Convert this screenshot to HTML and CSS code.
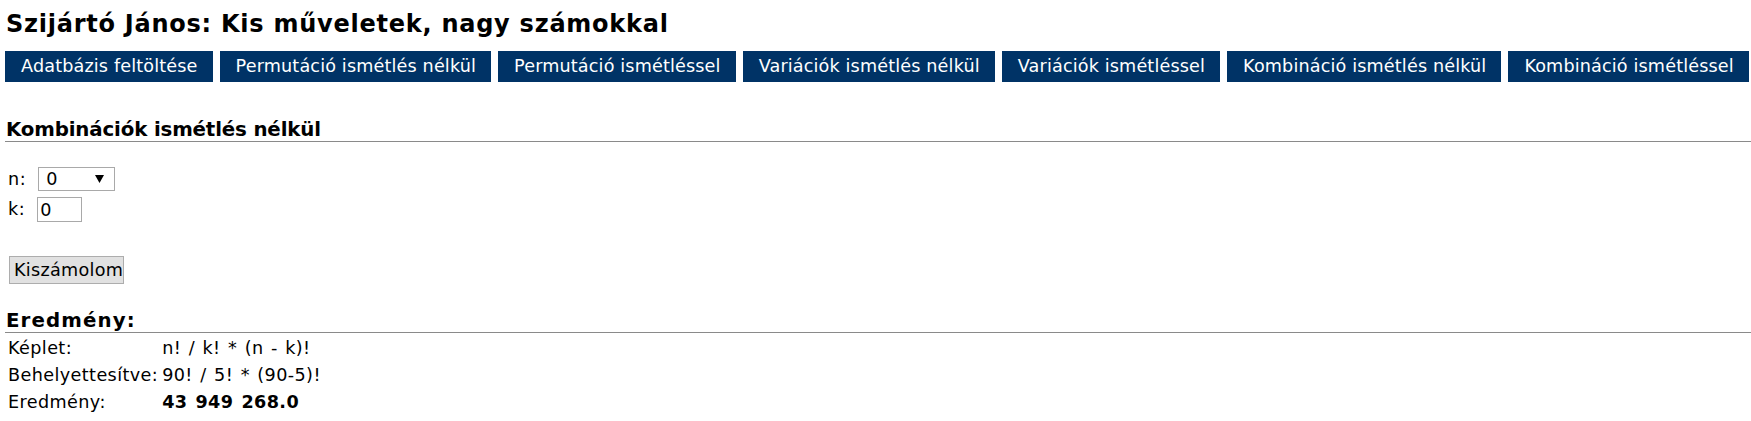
FILE: index.html
```html
<!DOCTYPE html>
<html lang="hu">
<head>
<meta charset="utf-8">
<title>Szijártó János: Kis műveletek, nagy számokkal</title>
<link rel="stylesheet" href="styles.css">
</head>
<body>
<div class="page">
  <h1 class="title">Szijártó János: Kis műveletek, nagy számokkal</h1>
  <nav class="nav">
    <a class="nav-btn" href="#">Adatbázis feltöltése</a>
    <a class="nav-btn" href="#">Permutáció ismétlés nélkül</a>
    <a class="nav-btn" href="#">Permutáció ismétléssel</a>
    <a class="nav-btn" href="#">Variációk ismétlés nélkül</a>
    <a class="nav-btn" href="#">Variációk ismétléssel</a>
    <a class="nav-btn" href="#">Kombináció ismétlés nélkül</a>
    <a class="nav-btn" href="#">Kombináció ismétléssel</a>
  </nav>

  <h2 class="section-title">Kombinációk ismétlés nélkül</h2>

  <form class="calc-form">
    <div class="field">
      <label class="field-label" for="n">n:</label>
      <span class="select-wrap">
        <select id="n" class="select">
          <option>0</option>
        </select>
        <svg class="select-arrow" width="9" height="8" viewBox="0 0 9 8"><path d="M0 0 L9 0 L4.5 8 Z" fill="#000"/></svg>
      </span>
    </div>
    <div class="field">
      <label class="field-label" for="k">k:</label>
      <input id="k" class="text-input" type="text" value="0">
    </div>
    <button type="button" class="submit-btn">Kiszámolom</button>
  </form>

  <h2 class="section-title result-title">Eredmény:</h2>
  <table class="result-table">
    <tr><td>Képlet:</td><td>n! / k! * (n - k)!</td></tr>
    <tr><td>Behelyettesítve:</td><td>90! / 5! * (90-5)!</td></tr>
    <tr><td>Eredmény:</td><td class="result-value">43 949 268.0</td></tr>
  </table>
</div>
</body>
</html>
```

FILE: styles.css
```css
html, body {
  margin: 0;
  padding: 0;
  background: #ffffff;
}

body {
  font-family: "DejaVu Sans", Verdana, sans-serif;
  font-size: 17.6px;
  color: #000000;
}

.page {
  padding: 10px 0 0 5px;
}

.title {
  margin: 0;
  font-size: 24px;
  line-height: 28px;
  font-weight: bold;
  letter-spacing: 0.75px;
  padding-left: 1px;
}

.nav {
  display: flex;
  gap: 7px;
  margin-top: 13px;
}

.nav-btn {
  display: block;
  flex: none;
  background: #003366;
  color: #ffffff;
  text-decoration: none;
  font-size: 17.6px;
  line-height: 21px;
  letter-spacing: 0.15px;
  padding: 5px 15px 5px 16px;
  white-space: nowrap;
}

.section-title {
  margin: 36px 0 0 0;
  font-size: 19.8px;
  line-height: 23px;
  font-weight: bold;
  letter-spacing: -0.15px;
  border-bottom: 1px solid #8a8a8a;
  padding-left: 1px;
}

.calc-form {
  margin-top: 25px;
  display: flex;
  flex-direction: column;
  align-items: flex-start;
}

.field {
  display: flex;
  align-items: center;
  gap: 12px;
  padding-left: 3px;
}

.field + .field {
  margin-top: 6px;
}

.field-label {
  font-size: 17.6px;
  line-height: 21px;
  letter-spacing: 0.6px;
}

.select-wrap {
  position: relative;
  display: inline-block;
}

.select {
  appearance: none;
  -webkit-appearance: none;
  width: 77px;
  height: 24px;
  border: 1px solid #a9a9a9;
  border-radius: 0;
  background: #ffffff;
  font-family: "DejaVu Sans", Verdana, sans-serif;
  font-size: 17.6px;
  padding: 0 0 0 7px;
  color: #000;
  margin: 0;
}

.select-arrow {
  position: absolute;
  right: 11px;
  top: 8px;
  pointer-events: none;
}

.text-input {
  width: 45px;
  height: 25px;
  box-sizing: border-box;
  border: 1px solid #a9a9a9;
  font-family: "DejaVu Sans", Verdana, sans-serif;
  font-size: 17.6px;
  padding: 0 2px;
  margin: 0;
  color: #000;
}

.submit-btn {
  margin: 34px 0 0 4px;
  width: 115px;
  height: 28px;
  background: #e1e1e1;
  border: 1px solid #adadad;
  border-radius: 0;
  font-family: "DejaVu Sans", Verdana, sans-serif;
  font-size: 17.6px;
  letter-spacing: 0.3px;
  color: #000;
  padding: 0 4px;
}

.result-title {
  margin-top: 25px;
  letter-spacing: 1.1px;
}

.result-table {
  margin-top: 1px;
  border-collapse: separate;
  border-spacing: 2px;
  font-size: 17.6px;
  letter-spacing: 0.4px;
  word-spacing: 1.5px;
}

.result-table td {
  padding: 2px 1px;
  line-height: 21px;
  white-space: nowrap;
}

.result-value {
  font-weight: bold;
}
```
